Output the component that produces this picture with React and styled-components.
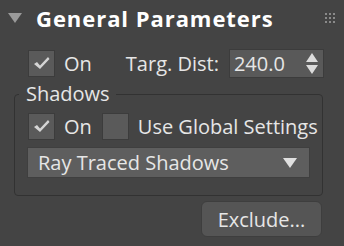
import styled, { createGlobalStyle } from "styled-components";

const GlobalStyle = createGlobalStyle`
  html, body {
    margin: 0;
    padding: 0;
    background: #444444;
  }
`;

const Panel = styled.div`
  width: 344px;
  height: 246px;
  background: #444444;
  color: #e6e6e6;
  font-family: "Open Sans", "Noto Sans", sans-serif;
  font-size: 20px;
  overflow: hidden;
  box-sizing: border-box;
`;

const Header = styled.div`
  display: flex;
  align-items: center;
  height: 36px;
  padding: 0 9px 0 8px;
`;

const Caret = styled.svg`
  width: 14px;
  height: 10px;
  margin-right: 14px;
  fill: #9a9a9a;
`;

const Title = styled.div`
  flex: 1;
  font-weight: 700;
  font-size: 22px;
  letter-spacing: 0.95px;
  color: #ffffff;
`;

const Grip = styled.div`
  display: grid;
  grid-template-columns: repeat(3, 2px);
  gap: 2px;
  align-self: flex-start;
  margin-top: 13px;
  span {
    width: 2px;
    height: 2px;
    background: #8a8a8a;
  }
`;

const Row = styled.div`
  display: flex;
  align-items: center;
  height: 30px;
  padding-left: ${(p) => p.$indent || 0}px;
  margin-top: ${(p) => p.$top || 0}px;
`;

const Box = styled.span`
  flex-shrink: 0;
  width: 25px;
  height: 25px;
  background: #5a5a5a;
  border: 1px solid #3c3c3c;
  display: flex;
  align-items: center;
  justify-content: center;
  margin-right: ${(p) => p.$gap || 9}px;
  svg {
    width: 17px;
    height: 14px;
  }
`;

const Label = styled.span`
  margin-right: ${(p) => p.$gap || 0}px;
  white-space: nowrap;
`;

const Spinner = styled.div`
  display: flex;
  align-items: center;
  flex-shrink: 0;
  width: 95px;
  height: 29px;
  background: #595959;
  border: 1px solid #3c3c3c;
  box-sizing: border-box;
  padding: 0 5px 0 4px;
  margin-left: 10px;
  span {
    flex: 1;
  }
  svg {
    width: 12px;
    height: 21px;
    fill: #dcdcdc;
  }
`;

const Group = styled.fieldset`
  margin: 8px 21px 0 14px;
  padding: 0 0 17px 4px;
  border: 1px solid #323232;
  border-radius: 4px;
  min-width: 0;
`;

const Legend = styled.legend`
  padding: 0 6px 0 7px;
  line-height: 16px;
`;

const Dropdown = styled.div`
  display: flex;
  align-items: center;
  justify-content: space-between;
  height: 29px;
  margin: 6px 12px 0 8px;
  padding: 0 12px 0 10px;
  background: #5e5e5e;
  border: 1px solid #3f3f3f;
  svg {
    width: 14px;
    height: 10px;
    fill: #e0e0e0;
  }
`;

const Footer = styled.div`
  display: flex;
  justify-content: flex-end;
  padding: 5px 22px 0 0;
`;

const Button = styled.button`
  width: 121px;
  height: 36px;
  background: #555555;
  color: #e6e6e6;
  border: 1px solid #3e3e3e;
  border-radius: 6px;
  font-family: inherit;
  font-size: 20px;
  padding: 0;
`;

function Check({ on, gap }) {
  return (
    <Box $gap={gap}>
      {on && (
        <svg viewBox="0 0 17 14">
          <path d="M1 8 L4 6 L7 9.5 L15 1 L16.5 3 L7 13 Z" fill="#d4d4d4" />
        </svg>
      )}
    </Box>
  );
}

export default function App() {
  return (
    <Panel>
      <GlobalStyle />
      <Header>
        <Caret viewBox="0 0 14 10">
          <path d="M0 0 H14 L7 10 Z" />
        </Caret>
        <Title>General Parameters</Title>
        <Grip>
          {Array.from({ length: 9 }).map((_, i) => (
            <span key={i} />
          ))}
        </Grip>
      </Header>
      <Row $indent={28} $top={12}>
        <Check on />
        <Label $gap={34}>On</Label>
        <Label>Targ. Dist:</Label>
        <Spinner>
          <span>240.0</span>
          <svg viewBox="0 0 12 21">
            <path d="M6 0 L12 9 H0 Z M0 12 H12 L6 21 Z" />
          </svg>
        </Spinner>
      </Row>
      <Group>
        <Legend>Shadows</Legend>
        <Row $indent={9} $top={9}>
          <Check on />
          <Label $gap={10}>On</Label>
          <Check />
          <Label>Use Global Settings</Label>
        </Row>
        <Dropdown>
          <span>Ray Traced Shadows</span>
          <svg viewBox="0 0 14 10">
            <path d="M0 0 H14 L7 10 Z" />
          </svg>
        </Dropdown>
      </Group>
      <Footer>
        <Button>Exclude...</Button>
      </Footer>
    </Panel>
  );
}
